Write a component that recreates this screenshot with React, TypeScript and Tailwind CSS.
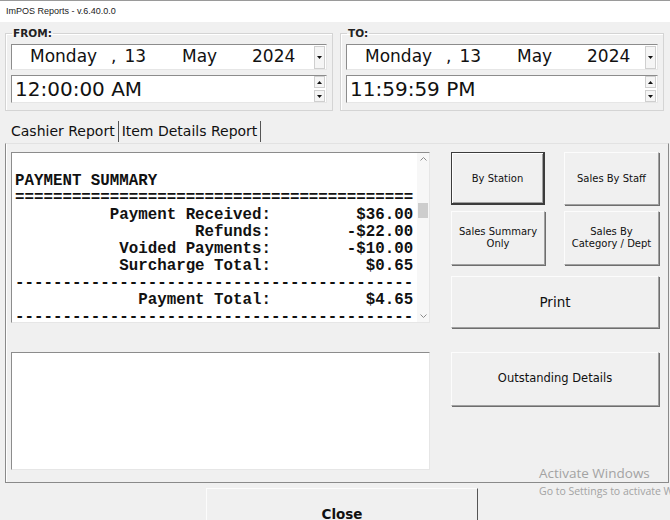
import React from 'react';

const mono = { fontFamily: '"Liberation Mono", "Courier New", monospace' };

const reportLines = [
  '',
  'PAYMENT SUMMARY',
  '==========================================',
  '          Payment Received:         $36.00',
  '                   Refunds:        -$22.00',
  '           Voided Payments:        -$10.00',
  '           Surcharge Total:          $0.65',
  '------------------------------------------',
  '             Payment Total:          $4.65',
  '------------------------------------------',
];

function Tri({ up }: { up?: boolean }) {
  return (
    <svg width="5" height="3" viewBox="0 0 5 3" className="block">
      {up ? <polygon points="2.5,0 5,3 0,3" fill="#111" /> : <polygon points="0,0 5,0 2.5,3" fill="#111" />}
    </svg>
  );
}

function DateGroup({ label, time }: { label: string; time: string }) {
  return (
    <fieldset className="border border-[#d4d4d4] shadow-[inset_1px_1px_0_#fff] px-[5px] pb-[7px] pt-[4px] w-full">
      <legend className="ml-[1px] px-[1px] text-[10.5px] leading-[13px] font-bold text-[#222] font-['DejaVu_Sans',sans-serif]">
        {label}
      </legend>
      {/* date picker */}
      <div className="flex items-center h-[26px] bg-white border-t border-l border-[#8c8c8c] border-r border-b border-r-[#e6e6e6] border-b-[#e6e6e6] text-[17px] text-[#111] font-['DejaVu_Sans',sans-serif]">
        <span className="pl-[18px] w-[99px]">Monday</span>
        <span className="w-[71px] flex">
          <span>,</span>
          <span className="ml-[8px]">13</span>
        </span>
        <span className="w-[70px]">May</span>
        <span>2024</span>
        <div className="ml-auto mr-[1px] h-[23px] w-[11px] flex items-center justify-center border border-[#cfcfcf] bg-[#f5f5f5]">
          <Tri />
        </div>
      </div>
      {/* time picker */}
      <div className="mt-[5px] flex items-center h-[28px] bg-white border-t border-l border-[#8c8c8c] border-r border-b border-r-[#e6e6e6] border-b-[#e6e6e6] text-[20px] text-[#111] font-['DejaVu_Sans',sans-serif]">
        <span className="pl-[3px]">{time}</span>
        <div className="ml-auto mr-[1px] flex flex-col gap-[2px]">
          <div className="h-[12px] w-[11px] flex items-center justify-center border border-[#cfcfcf] bg-[#f5f5f5]">
            <Tri up />
          </div>
          <div className="h-[12px] w-[11px] flex items-center justify-center border border-[#cfcfcf] bg-[#f5f5f5]">
            <Tri />
          </div>
        </div>
      </div>
    </fieldset>
  );
}

function Btn({ children, className = '', focused = false }: { children: React.ReactNode; className?: string; focused?: boolean }) {
  const edge = focused
    ? 'border border-[#3c3c3c] border-b-2 border-r-2 shadow-[inset_1px_1px_0_#fff,inset_-1px_-1px_0_#a0a0a0]'
    : 'border border-t-[#fcfcfc] border-l-[#fcfcfc] border-r-[#a0a0a0] border-b-[#a0a0a0] shadow-[1px_1px_0_#6e6e6e]';
  return (
    <div className={`flex items-center justify-center text-center bg-[#f0f0f0] text-[#111] font-['DejaVu_Sans',sans-serif] ${edge} ${className}`}>
      {children}
    </div>
  );
}

export default function App() {
  return (
    <div className="relative w-[670px] h-[520px] overflow-hidden bg-[#f0f0f0]">
      {/* Title bar */}
      <div className="h-[22px] bg-white border-t border-[#9a9a9a] flex items-center pl-[6px] text-[9px] text-[#222] font-['Liberation_Sans',Arial,sans-serif]">
        ImPOS Reports - v.6.40.0.0
      </div>

      {/* Date range */}
      <div className="flex gap-[7px] pl-[5px] pt-[5px] w-[664px]">
        <div className="w-[328px]">
          <DateGroup label="FROM:" time="12:00:00 AM" />
        </div>
        <div className="w-[324px]">
          <DateGroup label="TO:" time="11:59:59 PM" />
        </div>
      </div>

      {/* Tabs */}
      <div className="mt-[8px] ml-[11px] h-[24px] flex items-center text-[14px] text-[#111] font-['DejaVu_Sans',sans-serif]">
        <span>Cashier Report</span>
        <span className="mx-[3px] w-px h-[21px] bg-[#555]" />
        <span>Item Details Report</span>
        <span className="ml-[3px] w-px h-[21px] bg-[#555]" />
      </div>

      {/* Tab panel */}
      <div className="ml-[5px] w-[664px] h-[340px] border-t border-t-[#e2e2e2] border-l border-r border-b border-[#8a8a8a] shadow-[inset_1px_0_0_#fff] flex gap-[21px] pl-[5px] pt-[8px]">
        <div className="w-[419px] flex flex-col">
          {/* Report box */}
          <div className="h-[171px] flex bg-white border-t border-l border-[#8c8c8c] border-r border-b border-r-[#e6e6e6] border-b-[#e6e6e6] overflow-hidden">
            <pre
              style={mono}
              className="flex-1 pl-[3px] pt-[3px] text-[15.8px] leading-[17px] font-bold text-[#111]"
            >
              {reportLines.join('\n')}
            </pre>
            <div className="w-[12px] bg-[#f7f7f7] flex flex-col items-center justify-between py-[4px]">
              <svg width="7" height="4" viewBox="0 0 7 4"><polyline points="0.5,3.5 3.5,0.5 6.5,3.5" fill="none" stroke="#8a8a8a" strokeWidth="1" /></svg>
              <div className="flex-1 w-full relative">
                <div className="absolute left-[1px] right-[1px] top-[42px] h-[15px] bg-[#cdcdcd]" />
              </div>
              <svg width="7" height="4" viewBox="0 0 7 4"><polyline points="0.5,0.5 3.5,3.5 6.5,0.5" fill="none" stroke="#8a8a8a" strokeWidth="1" /></svg>
            </div>
          </div>
          {/* Second box */}
          <div className="mt-[29px] h-[118px] bg-white border-t border-l border-[#8c8c8c] border-r border-b border-r-[#e6e6e6] border-b-[#e6e6e6]" />
        </div>

        {/* Right buttons */}
        <div className="w-[208px] flex flex-col">
          <div className="grid grid-cols-[94px_95px] gap-x-[19px] gap-y-[6px]">
            <Btn focused className="h-[53px] text-[10px]">By Station</Btn>
            <Btn className="h-[53px] text-[10px]">Sales By Staff</Btn>
            <Btn className="h-[54px] text-[10px] leading-[12px]">Sales Summary<br />Only</Btn>
            <Btn className="h-[54px] text-[10px] leading-[12px]">Sales By<br />Category / Dept</Btn>
          </div>
          <Btn className="mt-[11px] h-[52px] text-[13.5px]">Print</Btn>
          <Btn className="mt-[24px] h-[54px] text-[11.5px]">Outstanding Details</Btn>
        </div>
      </div>

      {/* Close */}
      <div className="mt-[5px] ml-[206px] w-[272px] h-[50px] border-t border-l border-[#fcfcfc] border-r border-r-[#555] flex items-start justify-center pt-[15px] text-[13.5px] font-bold text-[#111] font-['DejaVu_Sans',sans-serif]">
        Close
      </div>

      {/* Windows watermark */}
      <div className="absolute left-[539px] top-[464px] text-[#a3a3a3] font-['Open_Sans',sans-serif] whitespace-nowrap pointer-events-none">
        <div className="text-[13.5px] leading-[18px]">Activate Windows</div>
        <div className="text-[10.5px] leading-[14px] mt-[2px]">Go to Settings to activate Windows.</div>
      </div>
    </div>
  );
}
